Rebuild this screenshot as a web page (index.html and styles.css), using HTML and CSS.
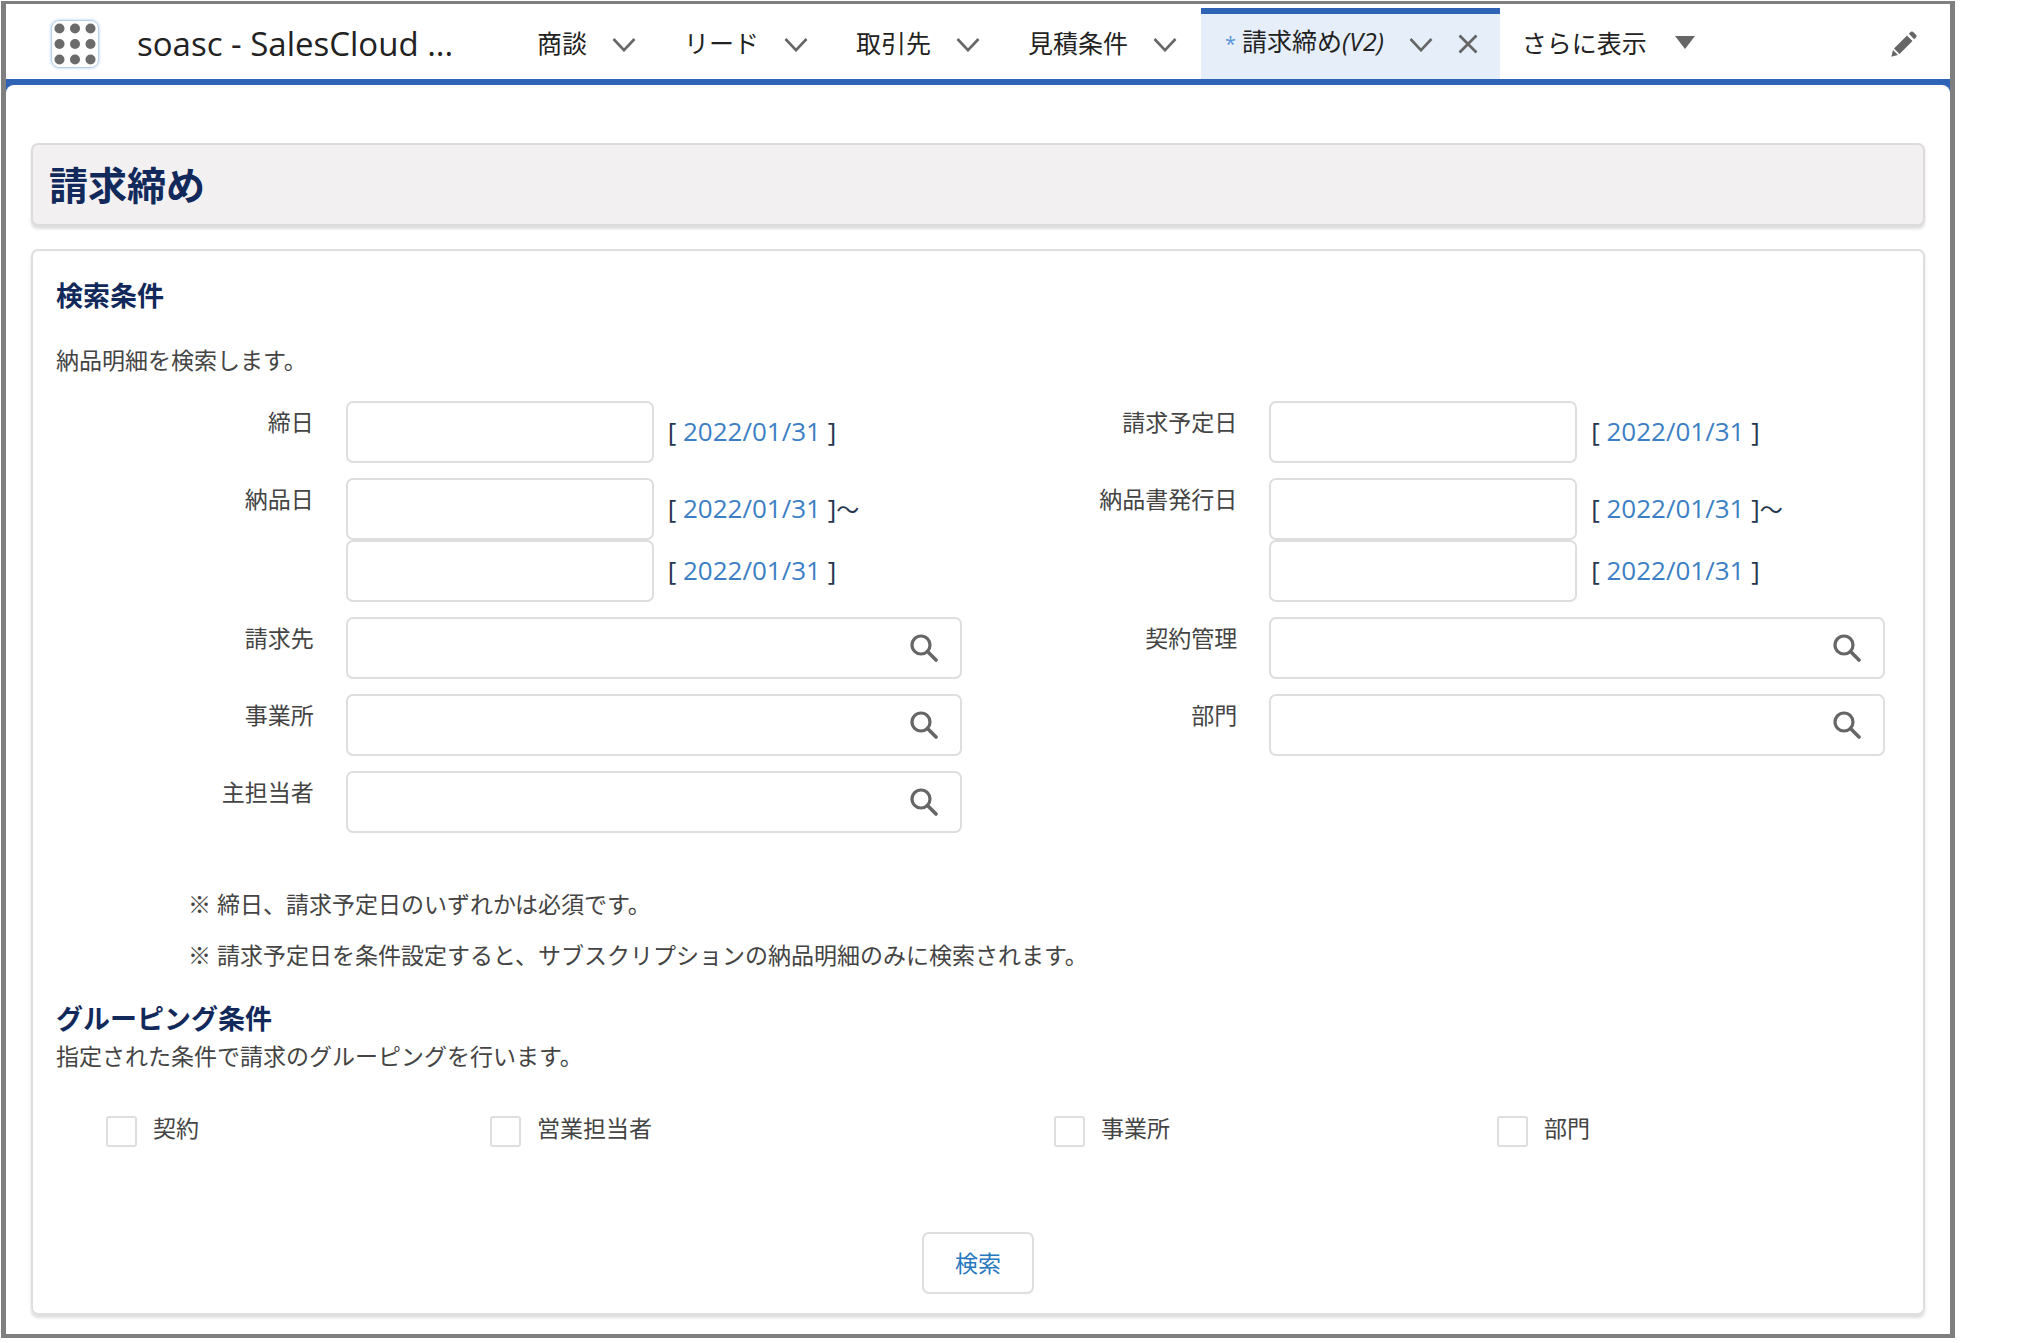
FILE: index.html
```html
<!DOCTYPE html>
<html lang="ja">
<head>
<meta charset="utf-8">
<meta name="viewport" content="width=device-width, initial-scale=1">
<title>請求締め</title>
<link rel="stylesheet" href="styles.css">
</head>
<body>
<svg class="sprite" aria-hidden="true">
  <symbol id="chevron" viewBox="0 0 24 14"><path d="M1.500 1 12 12.200 22.500 1" fill="none" stroke="currentColor" stroke-width="2.600"/></symbol>
  <symbol id="search" viewBox="0 0 28 28"><circle cx="11" cy="11" r="9" fill="none" stroke="currentColor" stroke-width="3.200"/><path d="M17.500 17.500 26 26" fill="none" stroke="currentColor" stroke-width="3.600" stroke-linecap="round"/></symbol>
</svg>
<div class="frame">
  <header class="topbar">
    <button class="launcher" type="button" aria-label="アプリケーションランチャー">
      <svg width="42" height="42" viewBox="0 0 42 42" fill="#6b6b6b" aria-hidden="true">
        <circle cx="5.500" cy="5.500" r="5"/><circle cx="21" cy="5.500" r="5"/><circle cx="36.500" cy="5.500" r="5"/>
        <circle cx="5.500" cy="21" r="5"/><circle cx="21" cy="21" r="5"/><circle cx="36.500" cy="21" r="5"/>
        <circle cx="5.500" cy="36.500" r="5"/><circle cx="21" cy="36.500" r="5"/><circle cx="36.500" cy="36.500" r="5"/>
      </svg>
    </button>
    <span class="app-name">soasc - SalesCloud ...</span>
    <nav class="tabs">
      <div class="tab"><a href="#">商談</a><button type="button" aria-label="商談メニュー"><svg class="chevron"><use href="#chevron"/></svg></button></div>
      <div class="tab"><a href="#">リード</a><button type="button" aria-label="リードメニュー"><svg class="chevron"><use href="#chevron"/></svg></button></div>
      <div class="tab"><a href="#">取引先</a><button type="button" aria-label="取引先メニュー"><svg class="chevron"><use href="#chevron"/></svg></button></div>
      <div class="tab"><a href="#">見積条件</a><button type="button" aria-label="見積条件メニュー"><svg class="chevron"><use href="#chevron"/></svg></button></div>
      <div class="tab tab-active"><a href="#" aria-current="page"><span class="unsaved">*</span>請求締め<i>(V2)</i></a><button type="button" aria-label="請求締めメニュー"><svg class="chevron"><use href="#chevron"/></svg></button><button type="button" aria-label="閉じる"><svg class="close" viewBox="0 0 20 20"><path d="M1.500 1.500 18.500 18.500M18.500 1.500 1.500 18.500" fill="none" stroke="currentColor" stroke-width="2.800"/></svg></button></div>
      <button class="more" type="button">さらに表示<svg width="20" height="13" viewBox="0 0 20 13" aria-hidden="true"><path d="M0 0h20L10 13z" fill="#666"/></svg></button>
    </nav>
    <button class="edit" type="button" aria-label="編集"><svg width="26" height="26" viewBox="0 0 26 26" fill="#666" aria-hidden="true"><path d="M16 4.500 21.500 10 8.500 23 3 17.500zM17.800 2.800 19.800.8Q21 0 22 .8L25.200 4Q26 5 25.200 6.200L23.200 8.200zM2 19 7 24 1 25.500Q0 26 .500 25z"/></svg></button>
  </header>

  <main class="content">
    <div class="page-title"><h1>請求締め</h1></div>

    <form class="card">
      <h2>検索条件</h2>
      <p class="lead">納品明細を検索します。</p>

      <div class="fields">
        <div class="field"><label for="close-date">締日</label><div class="control"><div class="date"><input id="close-date" type="text"><span>[ <a href="#">2022/01/31</a> ]</span></div></div></div>
        <div class="field"><label for="bill-date">請求予定日</label><div class="control"><div class="date"><input id="bill-date" type="text"><span>[ <a href="#">2022/01/31</a> ]</span></div></div></div>
        <div class="field"><label for="deliver-from">納品日</label><div class="control"><div class="date"><input id="deliver-from" type="text"><span>[ <a href="#">2022/01/31</a> ]<span class="range">～</span></span></div><div class="date"><input type="text" aria-label="納品日 終了"><span>[ <a href="#">2022/01/31</a> ]</span></div></div></div>
        <div class="field"><label for="issue-from">納品書発行日</label><div class="control"><div class="date"><input id="issue-from" type="text"><span>[ <a href="#">2022/01/31</a> ]<span class="range">～</span></span></div><div class="date"><input type="text" aria-label="納品書発行日 終了"><span>[ <a href="#">2022/01/31</a> ]</span></div></div></div>
        <div class="field"><label for="bill-to">請求先</label><div class="control lookup"><input id="bill-to" type="text"><svg class="search"><use href="#search"/></svg></div></div>
        <div class="field"><label for="contract">契約管理</label><div class="control lookup"><input id="contract" type="text"><svg class="search"><use href="#search"/></svg></div></div>
        <div class="field"><label for="office">事業所</label><div class="control lookup"><input id="office" type="text"><svg class="search"><use href="#search"/></svg></div></div>
        <div class="field"><label for="dept">部門</label><div class="control lookup"><input id="dept" type="text"><svg class="search"><use href="#search"/></svg></div></div>
        <div class="field"><label for="owner">主担当者</label><div class="control lookup"><input id="owner" type="text"><svg class="search"><use href="#search"/></svg></div></div>
      </div>

      <div class="notes">
        <p>※ 締日、請求予定日のいずれかは必須です。</p>
        <p>※ 請求予定日を条件設定すると、サブスクリプションの納品明細のみに検索されます。</p>
      </div>

      <h2>グルーピング条件</h2>
      <p>指定された条件で請求のグルーピングを行います。</p>
      <div class="checks">
        <label><input type="checkbox">契約</label>
        <label><input type="checkbox">営業担当者</label>
        <label><input type="checkbox">事業所</label>
        <label><input type="checkbox">部門</label>
      </div>

      <button class="submit" type="button">検索</button>
    </form>
  </main>
</div>
</body>
</html>
```
FILE: styles.css
```css
* { box-sizing: border-box; }

body {
  margin: 0;
  padding: 1px 72px 5px 1px;
  background: #fff;
  color: #444;
  font-family: "Open Sans", "Noto Sans CJK JP", sans-serif;
  font-size: 23px;
  line-height: 34px;
}

h1, h2, p { margin: 0; }
a { color: inherit; text-decoration: none; }
button {
  padding: 0;
  border: 0;
  background: none;
  color: inherit;
  font: inherit;
  cursor: pointer;
}
svg { display: block; }
.sprite { position: absolute; width: 0; height: 0; }

.frame {
  border: solid #7f7f7f;
  border-width: 3px 5px 4px;
  background: #2f63b5;
}

/* Global navigation */
.topbar {
  display: flex;
  align-items: center;
  height: 81px;
  padding: 4px 33px 0 45px;
  border-bottom: 6px solid #2f63b5;
  background: #fff;
  color: #222;
}
.launcher {
  display: grid;
  place-items: center;
  flex: none;
  width: 48px;
  height: 48px;
  border: 1px solid #b5d0ec;
  border-radius: 8px;
  box-shadow: 0 0 3px #a9c8e8;
}
.app-name {
  flex: none;
  width: 376px;
  margin-left: 38px;
  font-size: 33px;
  line-height: 44px;
}
.tabs {
  display: flex;
  align-self: stretch;
  font-size: 25px;
  white-space: nowrap;
}
.tab {
  display: flex;
  align-items: center;
  gap: 25px;
  padding: 0 24px;
}
.tab a { padding-bottom: 2px; }
.tab-active {
  padding-right: 22px;
  background: #e5eef9;
  box-shadow: inset 0 6px #2f63b5;
}
.unsaved { margin-right: 6px; color: #5b93dc; font-size: 20px; }
.chevron { width: 24px; height: 14px; margin-top: 3px; color: #666; }
.close { width: 20px; height: 20px; color: #666; }
.tab-active { gap: 25px; }
.more { display: flex; align-items: center; gap: 28px; padding: 0 22px 2px; }
.edit { margin-left: auto; }

/* Page */
.content {
  padding: 58px 25px 19px;
  border-radius: 8px 8px 0 0;
  background: #fff;
}
.page-title {
  margin-bottom: 23px;
  padding: 14px 16px;
  border: 2px solid #dddbdc;
  border-radius: 7px;
  background: #f2f0f1;
  box-shadow: 0 3px 3px #dedede;
}
h1 { color: #12295b; font-size: 39px; line-height: 51px; }
.card {
  padding: 25px 0 19px;
  border: 2px solid #dedede;
  border-radius: 7px;
  box-shadow: 0 3px 3px #dedede;
}
h2 { color: #12295b; font-size: 27px; line-height: 40px; }
.card > h2, .card > p { padding: 0 23px; }
.lead { margin-top: 27px; }

.fields {
  display: grid;
  grid-template-columns: 1fr 1fr;
  gap: 15px 0;
  margin: 24px 38px 46px 5px;
}
.field { display: grid; grid-template-columns: 1fr 2fr; }
.field label { padding: 4px 32px 0 0; text-align: right; }
.control { min-width: 0; }
.control input {
  width: 100%;
  height: 62px;
  padding: 0 16px;
  border: 2px solid #dedede;
  border-radius: 7px;
  background: #fff;
  color: inherit;
  font: inherit;
}
.date {
  display: grid;
  grid-template-columns: 1fr 1fr;
  align-items: center;
  color: #25364f;
  font-size: 26px;
  white-space: nowrap;
}
.date > span { padding: 0 0 2px 14px; }
.date a { color: #3c7fc4; }
.range { font-size: 23px; }
.lookup { display: grid; align-items: center; }
.lookup > * { grid-area: 1 / 1; }
.search {
  justify-self: end;
  width: 28px;
  height: 28px;
  margin-right: 24px;
  color: #666;
}

.notes { padding: 0 157px 0 155px; margin-bottom: 18px; line-height: 51px; }

.checks {
  display: grid;
  grid-template-columns: 384fr 564fr 443fr 388fr;
  margin: 43px 38px 85px 73px;
}
.checks label { display: flex; gap: 16px; line-height: 25px; }
.checks input {
  appearance: none;
  flex: none;
  width: 31px;
  height: 31px;
  margin: 0;
  border: 2px solid #dedede;
  border-radius: 3px;
  background: #fff;
}
.submit {
  display: block;
  height: 62px;
  margin: 0 auto;
  padding: 0 31px;
  border: 2px solid #dedede;
  border-radius: 7px;
  color: #2878c0;
}
```
